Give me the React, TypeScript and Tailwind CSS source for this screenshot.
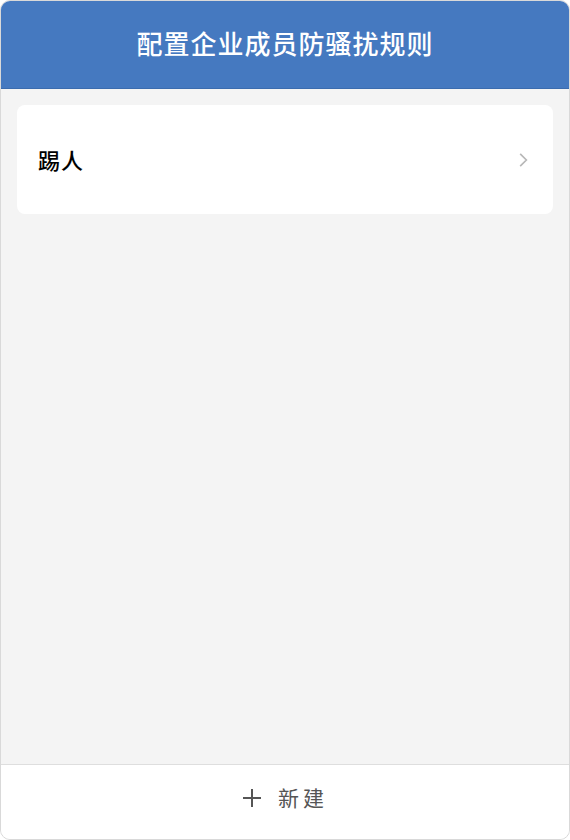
export default function App() {
  return (
    <div
      className="w-[570px] h-[840px] flex flex-col overflow-hidden rounded-[10px] border border-[#d9d9d9] bg-[#f4f4f4]"
      style={{ fontFamily: '"Noto Sans CJK SC", "Noto Sans", sans-serif' }}
    >
      <header className="h-[88px] shrink-0 flex items-center justify-center bg-[#4579c0] border-b border-[#3b6cae]">
        <h1 className="text-[26px] font-medium text-white tracking-[1px] pb-[4px]">配置企业成员防骚扰规则</h1>
      </header>

      <main className="flex-1 px-4 pt-4">
        <div className="h-[109px] flex items-center justify-between rounded-lg bg-white pl-[21px] pr-[21px]">
          <span className="text-[22px] font-medium text-black tracking-[1px]">踢人</span>
          <svg className="w-[18px] h-[18px] text-[#b8b8b8]" viewBox="0 0 16 16" fill="none" stroke="currentColor" strokeWidth={1.5}>
            <path d="M5.5 2.5 L11 8 L5.5 13.5" />
          </svg>
        </div>
      </main>

      <footer className="h-[75px] shrink-0 flex items-center justify-center gap-4 border-t border-[#dedede] bg-white text-[#555] pb-[8px]">
        <svg className="w-[20px] h-[20px]" viewBox="0 0 20 20" stroke="currentColor" strokeWidth={2}>
          <path d="M10 1 V19 M1 10 H19" />
        </svg>
        <span className="text-[21px] tracking-[4px]">新建</span>
      </footer>
    </div>
  );
}
